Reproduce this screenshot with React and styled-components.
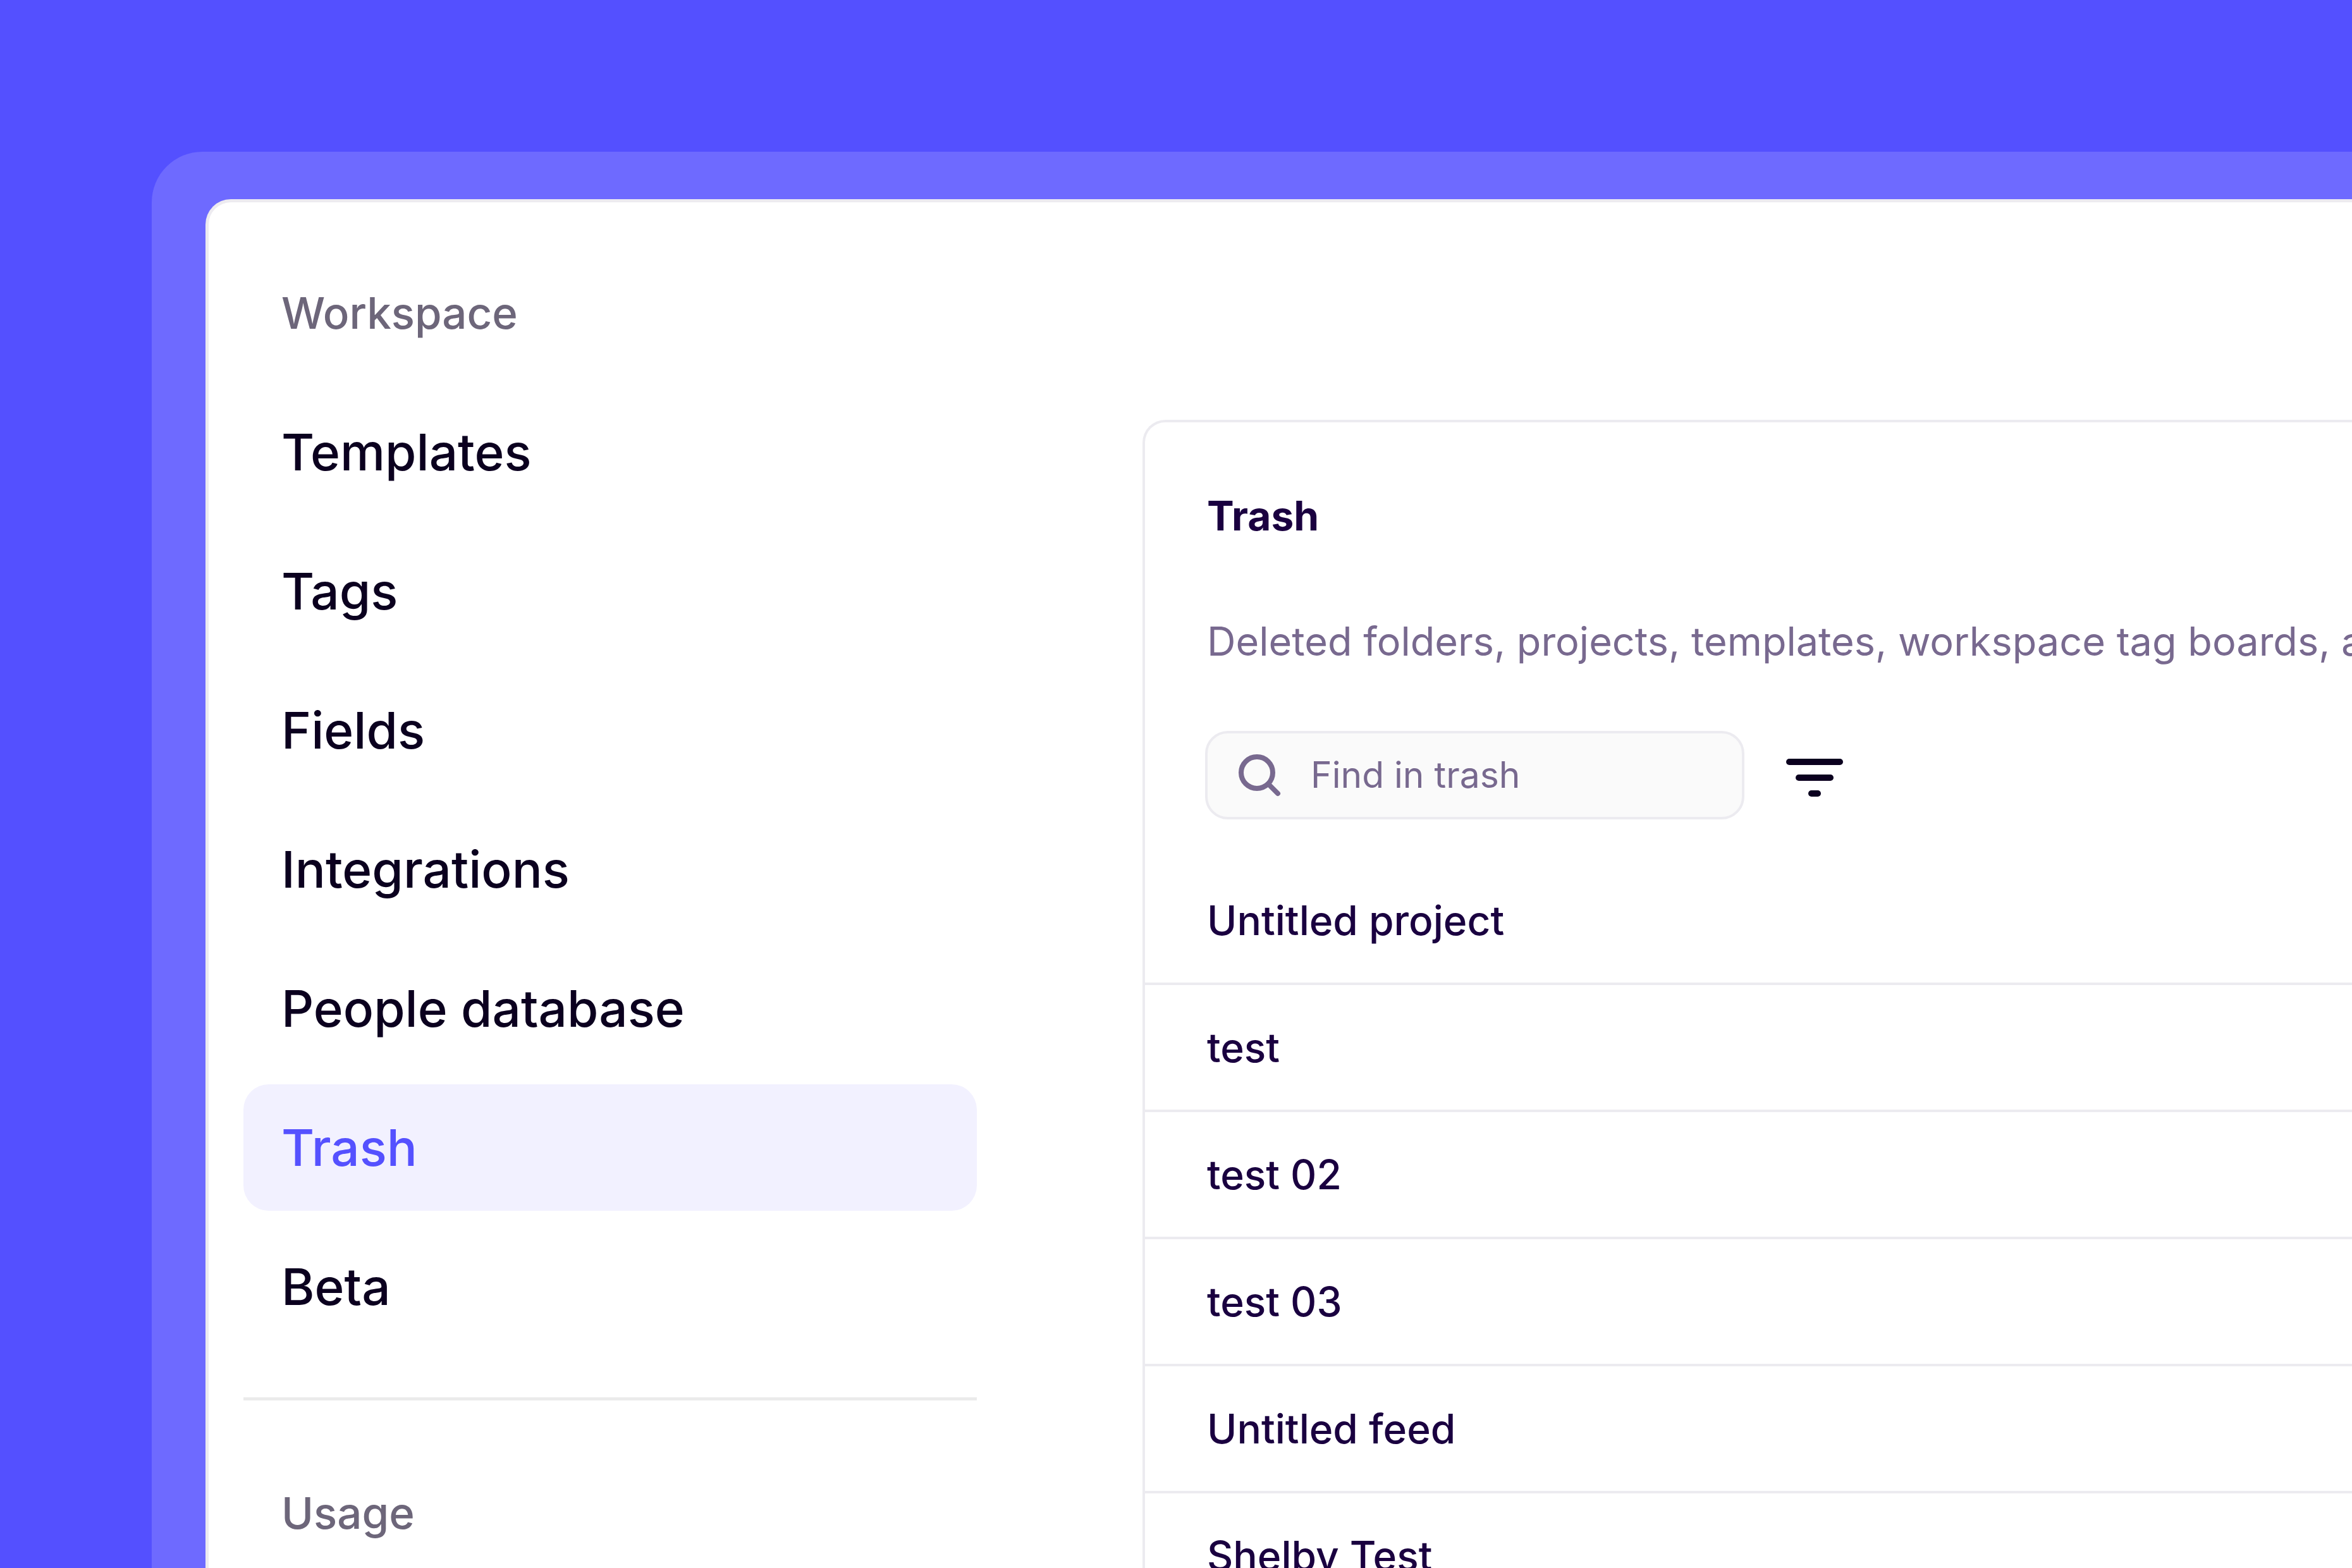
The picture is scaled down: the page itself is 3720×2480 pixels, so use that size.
import React from 'react';
import styled, { createGlobalStyle, css } from 'styled-components';

const GlobalStyle = createGlobalStyle`
  *, *::before, *::after { box-sizing: border-box; }
  body {
    margin: 0;
    background: #5450ff;
    font-family: Inter, "Liberation Sans", sans-serif;
  }
`;

const Page = styled.div`
  display: flex;
  height: 100vh;
  padding: 240px 0 0 240px;
  overflow: hidden;
  background: #5450ff;
`;

const Frame = styled.div`
  display: flex;
  flex: 1;
  min-width: 0;
  padding: 75px 0 0 85px;
  border-top-left-radius: 80px;
  background: #6e6aff;
`;

const Window = styled.div`
  display: flex;
  flex: 1;
  gap: 262px;
  min-width: 0;
  padding-left: 55px;
  border: solid #edebf0;
  border-width: 5px 0 0 5px;
  border-top-left-radius: 40px;
  background: #fff;
`;

const Sidebar = styled.nav`
  flex: 0 0 1160px;
  padding-top: 75px;
`;

const Heading = styled.h2`
  margin: 0;
  padding: 0 60px;
  font-size: 69px;
  font-weight: 500;
  line-height: 200px;
  color: #6d667a;
`;

const NavList = styled.ul`
  display: flex;
  flex-direction: column;
  gap: 20px;
  margin: 20px 0 0;
  padding: 0;
  list-style: none;
`;

const NavLink = styled.a`
  display: block;
  padding: 0 60px;
  border-radius: 40px;
  font-size: 80px;
  font-weight: 500;
  line-height: 200px;
  text-decoration: none;
  color: #0b001f;
  ${({ $active }) =>
    $active &&
    css`
      background: #f2f1ff;
      color: #5551ff;
    `}
`;

const Divider = styled.hr`
  height: 5px;
  margin: 75px 0 78px;
  border: 0;
  background: #ebebeb;
`;

const Card = styled.main`
  flex: 1;
  min-width: 0;
  margin-top: 344px;
  border: solid #ecebf0;
  border-width: 4px 0 0 4px;
  border-top-left-radius: 36px;
  overflow: hidden;
`;

const Title = styled.h1`
  margin: 0;
  padding: 108px 0 0 98px;
  font-size: 64px;
  font-weight: 700;
  line-height: 80px;
  color: #1a0040;
`;

const Description = styled.p`
  margin: 0;
  padding: 118px 0 0 98px;
  font-size: 63px;
  line-height: 80px;
  white-space: nowrap;
  color: #78698f;
`;

const Toolbar = styled.div`
  display: flex;
  align-items: center;
  gap: 56px;
  padding: 102px 0 61px 95px;
`;

const SearchBox = styled.label`
  display: flex;
  align-items: center;
  gap: 45px;
  width: 853px;
  height: 140px;
  padding: 0 48px;
  border: 4px solid #ecebf0;
  border-radius: 36px;
  background: #fafafa;
  color: #78698f;
`;

const SearchInput = styled.input`
  flex: 1;
  min-width: 0;
  padding: 0;
  border: 0;
  outline: 0;
  background: transparent;
  font: 400 57px/72px Inter, "Liberation Sans", sans-serif;
  color: inherit;
  &::placeholder {
    color: inherit;
    opacity: 1;
  }
`;

const FilterButton = styled.button`
  display: flex;
  padding: 18px 10px 10px;
  border: 0;
  background: none;
  color: #0b001f;
  cursor: pointer;
`;

const RowList = styled.ul`
  margin: 0;
  padding: 0;
  list-style: none;
`;

const Row = styled.li`
  padding: 0 0 0 98px;
  border-bottom: 4px solid #ecebf0;
  font-size: 64px;
  font-weight: 500;
  line-height: 197px;
  white-space: nowrap;
  color: #1a0040;
`;

function SearchIcon() {
  return (
    <svg width="70" height="70" viewBox="0 0 70 70" fill="none" stroke="currentColor" strokeWidth="8" strokeLinecap="round" aria-hidden="true">
      <circle cx="30" cy="31" r="25" />
      <path d="M48 49 63 64" />
    </svg>
  );
}

function FilterIcon() {
  return (
    <svg width="90" height="60" viewBox="0 0 90 60" fill="currentColor" aria-hidden="true">
      <rect width="90" height="10" rx="5" />
      <rect x="15" y="25" width="60" height="10" rx="5" />
      <rect x="35" y="50" width="20" height="10" rx="5" />
    </svg>
  );
}

const navItems = ['Templates', 'Tags', 'Fields', 'Integrations', 'People database', 'Trash', 'Beta'];
const trashed = ['Untitled project', 'test', 'test 02', 'test 03', 'Untitled feed', 'Shelby Test'];

export default function App() {
  return (
    <>
      <GlobalStyle />
      <Page>
        <Frame>
          <Window>
            <Sidebar aria-label="Settings">
              <Heading>Workspace</Heading>
              <NavList>
                {navItems.map((item) => (
                  <li key={item}>
                    <NavLink href="#" $active={item === 'Trash'}>
                      {item}
                    </NavLink>
                  </li>
                ))}
              </NavList>
              <Divider />
              <Heading>Usage</Heading>
            </Sidebar>
            <Card>
              <Title>Trash</Title>
              <Description>Deleted folders, projects, templates, workspace tag boards, a</Description>
              <Toolbar>
                <SearchBox>
                  <SearchIcon />
                  <SearchInput type="search" placeholder="Find in trash" aria-label="Find in trash" />
                </SearchBox>
                <FilterButton type="button" aria-label="Filter">
                  <FilterIcon />
                </FilterButton>
              </Toolbar>
              <RowList>
                {trashed.map((name) => (
                  <Row key={name}>{name}</Row>
                ))}
              </RowList>
            </Card>
          </Window>
        </Frame>
      </Page>
    </>
  );
}
